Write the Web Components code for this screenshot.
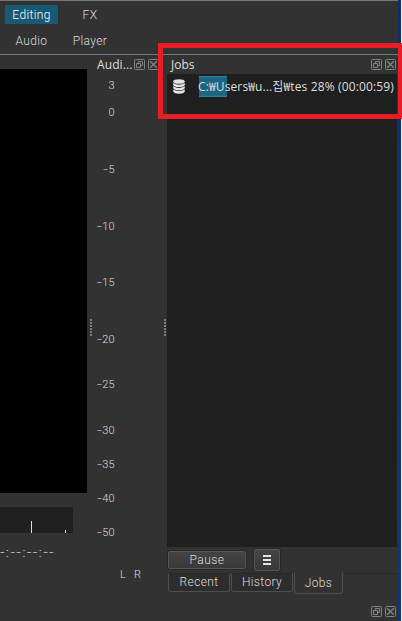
<!DOCTYPE html>
<html lang="ko">
<head>
<meta charset="utf-8">
<title>Jobs</title>
<style>
    html, body {
        margin: 0;
        height: 100%;
        overflow: hidden;
        background: #323232;
    }
</style>
</head>
<body>
<editor-window></editor-window>
<script>
class LayoutButton extends HTMLElement {
    connectedCallback() {
        this.attachShadow({ mode: 'open' }).innerHTML = `
            <style>
                :host {
                    display: block;
                    box-sizing: border-box;
                    height: 19px;
                    font-size: 12px;
                    line-height: 20px;
                    letter-spacing: .35px;
                    text-align: center;
                    white-space: nowrap;
                }
                :host([active]) {
                    background: #185a74;
                    color: #fff;
                }
            </style>
            <slot></slot>
        `;
    }
}
customElements.define('layout-button', LayoutButton);

class DockButtons extends HTMLElement {
    connectedCallback() {
        this.attachShadow({ mode: 'open' }).innerHTML = `
            <style>
                :host {
                    display: flex;
                    gap: 3px;
                    height: 11px;
                    flex: none;
                }
                svg {
                    display: block;
                    width: 11px;
                    height: 11px;
                    fill: none;
                    stroke: #828282;
                }
            </style>
            <svg viewBox="0 0 11 11"><rect x=".5" y=".5" width="10" height="10" rx="1"/><path d="M4.5 4.5V2.5H8.5V6.5H6.5M2.5 4.5H6.5V8.5H2.5Z"/></svg>
            <svg viewBox="0 0 11 11"><rect x=".5" y=".5" width="10" height="10" rx="1"/><path d="M2.2 2.2L8.8 8.8M8.8 2.2L2.2 8.8" stroke-width="1.4"/></svg>
        `;
    }
}
customElements.define('dock-buttons', DockButtons);

class SplitHandle extends HTMLElement {
    connectedCallback() {
        this.attachShadow({ mode: 'open' }).innerHTML = `
            <style>
                :host {
                    display: block;
                    width: 2px;
                    height: 17px;
                    background: repeating-linear-gradient(#7c7c7c 0 2px, transparent 2px 3px);
                }
            </style>
        `;
    }
}
customElements.define('split-handle', SplitHandle);

class AudioMeter extends HTMLElement {
    connectedCallback() {
        // [label, row height]: the dB scale is not linear
        const marks = [['3', 22], ['0', 32], ['-5', 82], ['-10', 32], ['-15', 80], ['-20', 34], ['-25', 56], ['-30', 36], ['-35', 32], ['-40', 36], ['-50', 32]];
        this.attachShadow({ mode: 'open' }).innerHTML = `
            <style>
                :host {
                    display: grid;
                    grid-template-columns: 10px 1fr 3px;
                    grid-template-rows: 19px 480px 1fr;
                }
                header {
                    grid-column: 2 / 4;
                    display: flex;
                    align-items: center;
                    font: 12px "Open Sans", "Noto Sans", sans-serif;
                    line-height: 19px;
                }
                header span { width: 37px; flex: none; white-space: nowrap; letter-spacing: .1px; }
                split-handle { margin-top: 245px; }
                split-handle.left { margin-left: 3px; }
                .scale {
                    width: 17.5px;
                    display: flex;
                    flex-direction: column;
                    align-items: flex-end;
                    font-size: 11px;
                }
                .mark {
                    display: flex;
                    align-items: center;
                    flex: none;
                    white-space: nowrap;
                }
                .minus { transform: scaleX(1.6); transform-origin: right; margin-right: .5px; }
                footer {
                    grid-column: 2;
                    padding: 13px 0 0 23px;
                    font-size: 11px;
                    line-height: 16px;
                    word-spacing: 5.5px;
                }
            </style>
            <header><span>Audi...</span><dock-buttons></dock-buttons></header>
            <split-handle class="left"></split-handle>
            <div class="scale">${marks.map(([t, h]) => `<div class="mark" style="height:${h}px">${t[0] === '-' ? `<span class="minus">-</span>${t.slice(1)}` : t}</div>`).join('')}</div>
            <split-handle></split-handle>
            <span></span>
            <footer>L R</footer>
        `;
    }
}
customElements.define('audio-meter', AudioMeter);

class VideoPlayer extends HTMLElement {
    connectedCallback() {
        this.attachShadow({ mode: 'open' }).innerHTML = `
            <style>
                :host { display: block; padding-top: 14px; overflow: hidden; }
                .screen { height: 424px; background: #000; }
                .scrub {
                    display: flex;
                    align-items: flex-end;
                    width: 73px;
                    height: 26px;
                    margin-top: 14px;
                    background: #202020;
                }
                .scrub i { width: 1px; height: 12px; margin-left: 31px; background: #ddd; }
                .scrub i + i { height: 3px; margin-left: 33px; }
                .time {
                    margin-top: 12px;
                    width: max-content;
                    font-size: 12px;
                    line-height: 16px;
                    letter-spacing: .9px;
                    transform: scaleX(1.35);
                    transform-origin: left;
                    white-space: nowrap;
                }
            </style>
            <div class="screen"></div>
            <div class="scrub"><i></i><i></i></div>
            <div class="time">-:--:--:--</div>
        `;
    }
}
customElements.define('video-player', VideoPlayer);

class JobItem extends HTMLElement {
    connectedCallback() {
        this.attachShadow({ mode: 'open' }).innerHTML = `
            <style>
                :host {
                    display: flex;
                    align-items: center;
                    height: 25px;
                    padding-left: 6px;
                    font: 12px "Open Sans", "Noto Sans CJK KR", sans-serif;
                }
                svg { display: block; width: 12px; height: 15px; flex: none; }
                .label {
                    box-sizing: border-box;
                    height: 21px;
                    width: 198px;
                    margin-left: 13px;
                    line-height: 21px;
                    letter-spacing: .13px;
                    white-space: nowrap;
                    background: linear-gradient(#3588a3, #1b6581 2px, #1b6581 19px, #3588a3) 1px 0 / 28px 21px no-repeat;
                }
            </style>
            <svg viewBox="0 0 12 15" fill="#e4e4e4"><ellipse cx="6" cy="2.5" rx="5.8" ry="2.3"/><path d="M.2 4.1Q6 7.3 11.8 4.1V6Q11 8.1 6 8.1T.2 6ZM.2 7.3Q6 10.5 11.8 7.3V9Q11 11.3 6 11.3T.2 9ZM.2 10.5Q6 13.7 11.8 10.5V12.2Q11 14.7 6 14.7T.2 12.2Z"/></svg>
            <div class="label"><slot></slot></div>
        `;
    }
}
customElements.define('job-item', JobItem);

class PushButton extends HTMLElement {
    connectedCallback() {
        this.attachShadow({ mode: 'open' }).innerHTML = `
            <style>
                :host {
                    display: flex;
                    align-items: center;
                    justify-content: center;
                    box-sizing: border-box;
                    border: 1px solid #555;
                    border-radius: 2px;
                    background: linear-gradient(#444, #393939);
                    box-shadow: 0 0 0 1px #292929;
                    font-size: 12px;
                }
            </style>
            <slot></slot>
        `;
    }
}
customElements.define('push-button', PushButton);

class DockTab extends HTMLElement {
    connectedCallback() {
        this.attachShadow({ mode: 'open' }).innerHTML = `
            <style>
                :host {
                    display: block;
                    box-sizing: border-box;
                    height: 19px;
                    border: 1px solid #4e4e4e;
                    border-top-color: #272727;
                    border-radius: 0 0 3px 3px;
                    background: #2d2d2d;
                    font-size: 12px;
                    line-height: 17px;
                    letter-spacing: .35px;
                    text-align: center;
                }
                :host([active]) {
                    height: 22px;
                    border-top-color: transparent;
                    background: #323232;
                    line-height: 20px;
                }
            </style>
            <slot></slot>
        `;
    }
}
customElements.define('dock-tab', DockTab);

class JobsDock extends HTMLElement {
    connectedCallback() {
        this.attachShadow({ mode: 'open' }).innerHTML = `
            <style>
                :host { display: flex; flex-direction: column; }
                header {
                    display: flex;
                    align-items: center;
                    justify-content: space-between;
                    height: 19px;
                    padding: 0 1px 0 4px;
                    font: 12px "Open Sans", "Noto Sans", sans-serif;
                }
                .list { height: 473px; background: #1f1f1f; }
                .actions {
                    display: flex;
                    align-items: center;
                    gap: 8px;
                    height: 25px;
                    padding-left: 1px;
                }
                .pause { width: 78px; height: 18px; letter-spacing: .5px; }
                .menu { width: 26px; height: 22px; }
                .bars { display: grid; gap: 2px; }
                .bars i { width: 8px; height: 2px; background: #e4e4e4; }
                .tabs {
                    display: flex;
                    align-items: flex-start;
                    padding-left: 1px;
                    height: 22px;
                    gap: 1px;
                }
                .rest { flex: 1; height: 1px; background: #282828; margin-top: 1px; }
                dock-tab { margin-top: 1px; width: 62px; }
                dock-tab[active] { margin-top: 0; width: 49px; }
                .next { align-self: flex-end; margin: 12px 1px 0 0; }
            </style>
            <header><span>Jobs</span><dock-buttons></dock-buttons></header>
            <div class="list"><job-item>C:₩Users₩u...집₩tes 28% (00:00:59)</job-item></div>
            <div class="actions">
                <push-button class="pause">Pause</push-button>
                <push-button class="menu"><div class="bars"><i></i><i></i><i></i></div></push-button>
            </div>
            <div class="tabs">
                <dock-tab>Recent</dock-tab>
                <dock-tab>History</dock-tab>
                <dock-tab active>Jobs</dock-tab>
                <div class="rest"></div>
            </div>
            <dock-buttons class="next"></dock-buttons>
        `;
    }
}
customElements.define('jobs-dock', JobsDock);

class EditorWindow extends HTMLElement {
    connectedCallback() {
        this.attachShadow({ mode: 'open' }).innerHTML = `
            <style>
                :host {
                    display: block;
                    position: relative;
                    box-sizing: border-box;
                    width: 402px;
                    height: 621px;
                    padding-right: 4px;
                    overflow: hidden;
                    background:
                        linear-gradient(#f4f4f4, #f4f4f4) right / 1px 100% no-repeat,
                        linear-gradient(#122d68, #153578) right / 4px 100% no-repeat #323232;
                    color: #dedede;
                    font-family: Roboto, "Liberation Sans", sans-serif;
                    font-weight: 300;
                }
                nav {
                    box-sizing: border-box;
                    height: 55px;
                    border-top: 1px solid #777;
                    border-bottom: 1px solid #777;
                    padding: 4px 0 0 5px;
                    display: grid;
                    grid-template-columns: 53px 64px;
                    grid-auto-rows: 19px;
                    row-gap: 7px;
                    align-content: start;
                }
                main {
                    display: grid;
                    grid-template-columns: 87px 80px 230px;
                    height: 566px;
                }
                .mark {
                    position: absolute;
                    box-sizing: border-box;
                    left: 158px;
                    top: 43px;
                    width: 244px;
                    height: 76px;
                    border: 5px solid #e81d25;
                    border-right-width: 4px;
                }
            </style>
            <nav>
                <layout-button active>Editing</layout-button>
                <layout-button>FX</layout-button>
                <layout-button>Audio</layout-button>
                <layout-button>Player</layout-button>
            </nav>
            <main>
                <video-player></video-player>
                <audio-meter></audio-meter>
                <jobs-dock></jobs-dock>
            </main>
            <div class="mark"></div>
        `;
    }
}
customElements.define('editor-window', EditorWindow);
</script>
</body>
</html>
